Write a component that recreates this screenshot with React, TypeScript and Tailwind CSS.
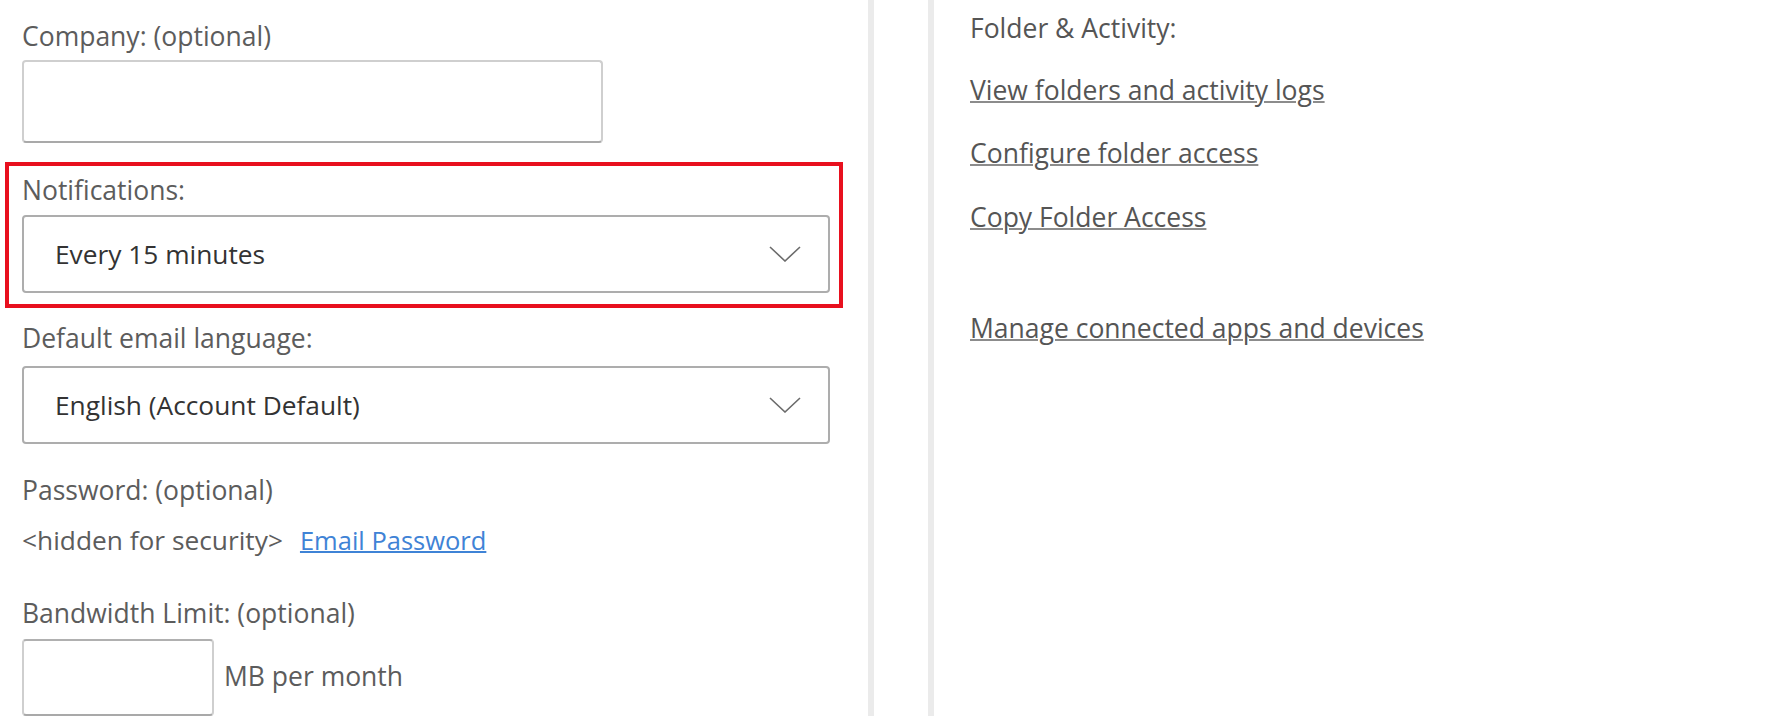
import React from "react";

function Chevron() {
  return (
    <svg width="32" height="16" viewBox="0 0 32 16" fill="none" className="shrink-0">
      <polyline points="1,1 16,15 31,1" stroke="#6b6b6b" strokeWidth="1.6" />
    </svg>
  );
}

function Select({ value }: { value: string }) {
  return (
    <div className="flex h-[78px] w-[808px] items-center justify-between rounded-[4px] border-2 border-[#adadad] bg-white pl-[31px] pr-[27px]">
      <span className="text-[26.3px] leading-[32px] text-[#333333]">{value}</span>
      <Chevron />
    </div>
  );
}

function Label({ children, className = "" }: { children: React.ReactNode; className?: string }) {
  return <div className={`text-[26.5px] leading-[32px] text-[#5c5c5c] ${className}`}>{children}</div>;
}

export default function App() {
  return (
    <div className="flex h-[723px] w-[1783px] overflow-hidden bg-white font-['Open_Sans',sans-serif]">
      {/* account details form */}
      <div className="flex w-[868px] shrink-0 flex-col">
        <div className="pl-[22px] pt-[20px]">
          <Label>Company: (optional)</Label>
          <div className="mt-[8px] h-[83px] w-[581px] rounded-[4px] border-2 border-[#cfcfcf] border-b-[#a9a9a9]" />
        </div>

        <div className="ml-[5px] mt-[19px] w-[838px] border-4 border-[#e8101e] pb-[11px] pl-[13px] pt-[8px]">
          <Label>Notifications:</Label>
          <div className="mt-[9px]">
            <Select value="Every 15 minutes" />
          </div>
        </div>

        <div className="pl-[22px]">
          <Label className="mt-[14px]">Default email language:</Label>
          <div className="mt-[12px]">
            <Select value="English (Account Default)" />
          </div>

          <Label className="mt-[30px]">Password: (optional)</Label>
          <div className="mt-[18px] flex items-center text-[26.3px] leading-[32px] text-[#5c5c5c]">
            <span>&lt;hidden for security&gt;</span>
            <a className="ml-[17px] cursor-pointer text-[25.5px] text-[#3f83d6] underline decoration-[#3f83d6] decoration-2">
              Email Password
            </a>
          </div>

          <Label className="mt-[41px]">Bandwidth Limit: (optional)</Label>
          <div className="mt-[10px] flex items-center">
            <div className="h-[77px] w-[192px] rounded-[4px] border-2 border-[#cfcfcf] border-b-[#a9a9a9] border-t-[#b0b0b0]" />
            <span className="ml-[10px] -translate-y-[2px] text-[26.5px] leading-[32px] text-[#5c5c5c]">MB per month</span>
          </div>
        </div>
      </div>

      {/* column dividers */}
      <div className="h-[716px] w-[6px] shrink-0 bg-[#ebebeb]" />
      <div className="w-[54px] shrink-0" />
      <div className="h-[716px] w-[6px] shrink-0 bg-[#ebebeb]" />

      {/* folder & activity links */}
      <div className="flex flex-col pl-[36px] pt-[12px] text-[26.5px] leading-[32px] text-[#555555]">
        <div>Folder &amp; Activity:</div>
        <a className="mt-[30px] w-fit cursor-pointer underline decoration-[#8c8c8c] decoration-2">
          View folders and activity logs
        </a>
        <a className="mt-[31px] w-fit cursor-pointer underline decoration-[#8c8c8c] decoration-2">
          Configure folder access
        </a>
        <a className="mt-[32px] w-fit cursor-pointer underline decoration-[#8c8c8c] decoration-2">
          Copy Folder Access
        </a>
        <a className="mt-[79px] w-fit cursor-pointer underline decoration-[#8c8c8c] decoration-2">
          Manage connected apps and devices
        </a>
      </div>
    </div>
  );
}
